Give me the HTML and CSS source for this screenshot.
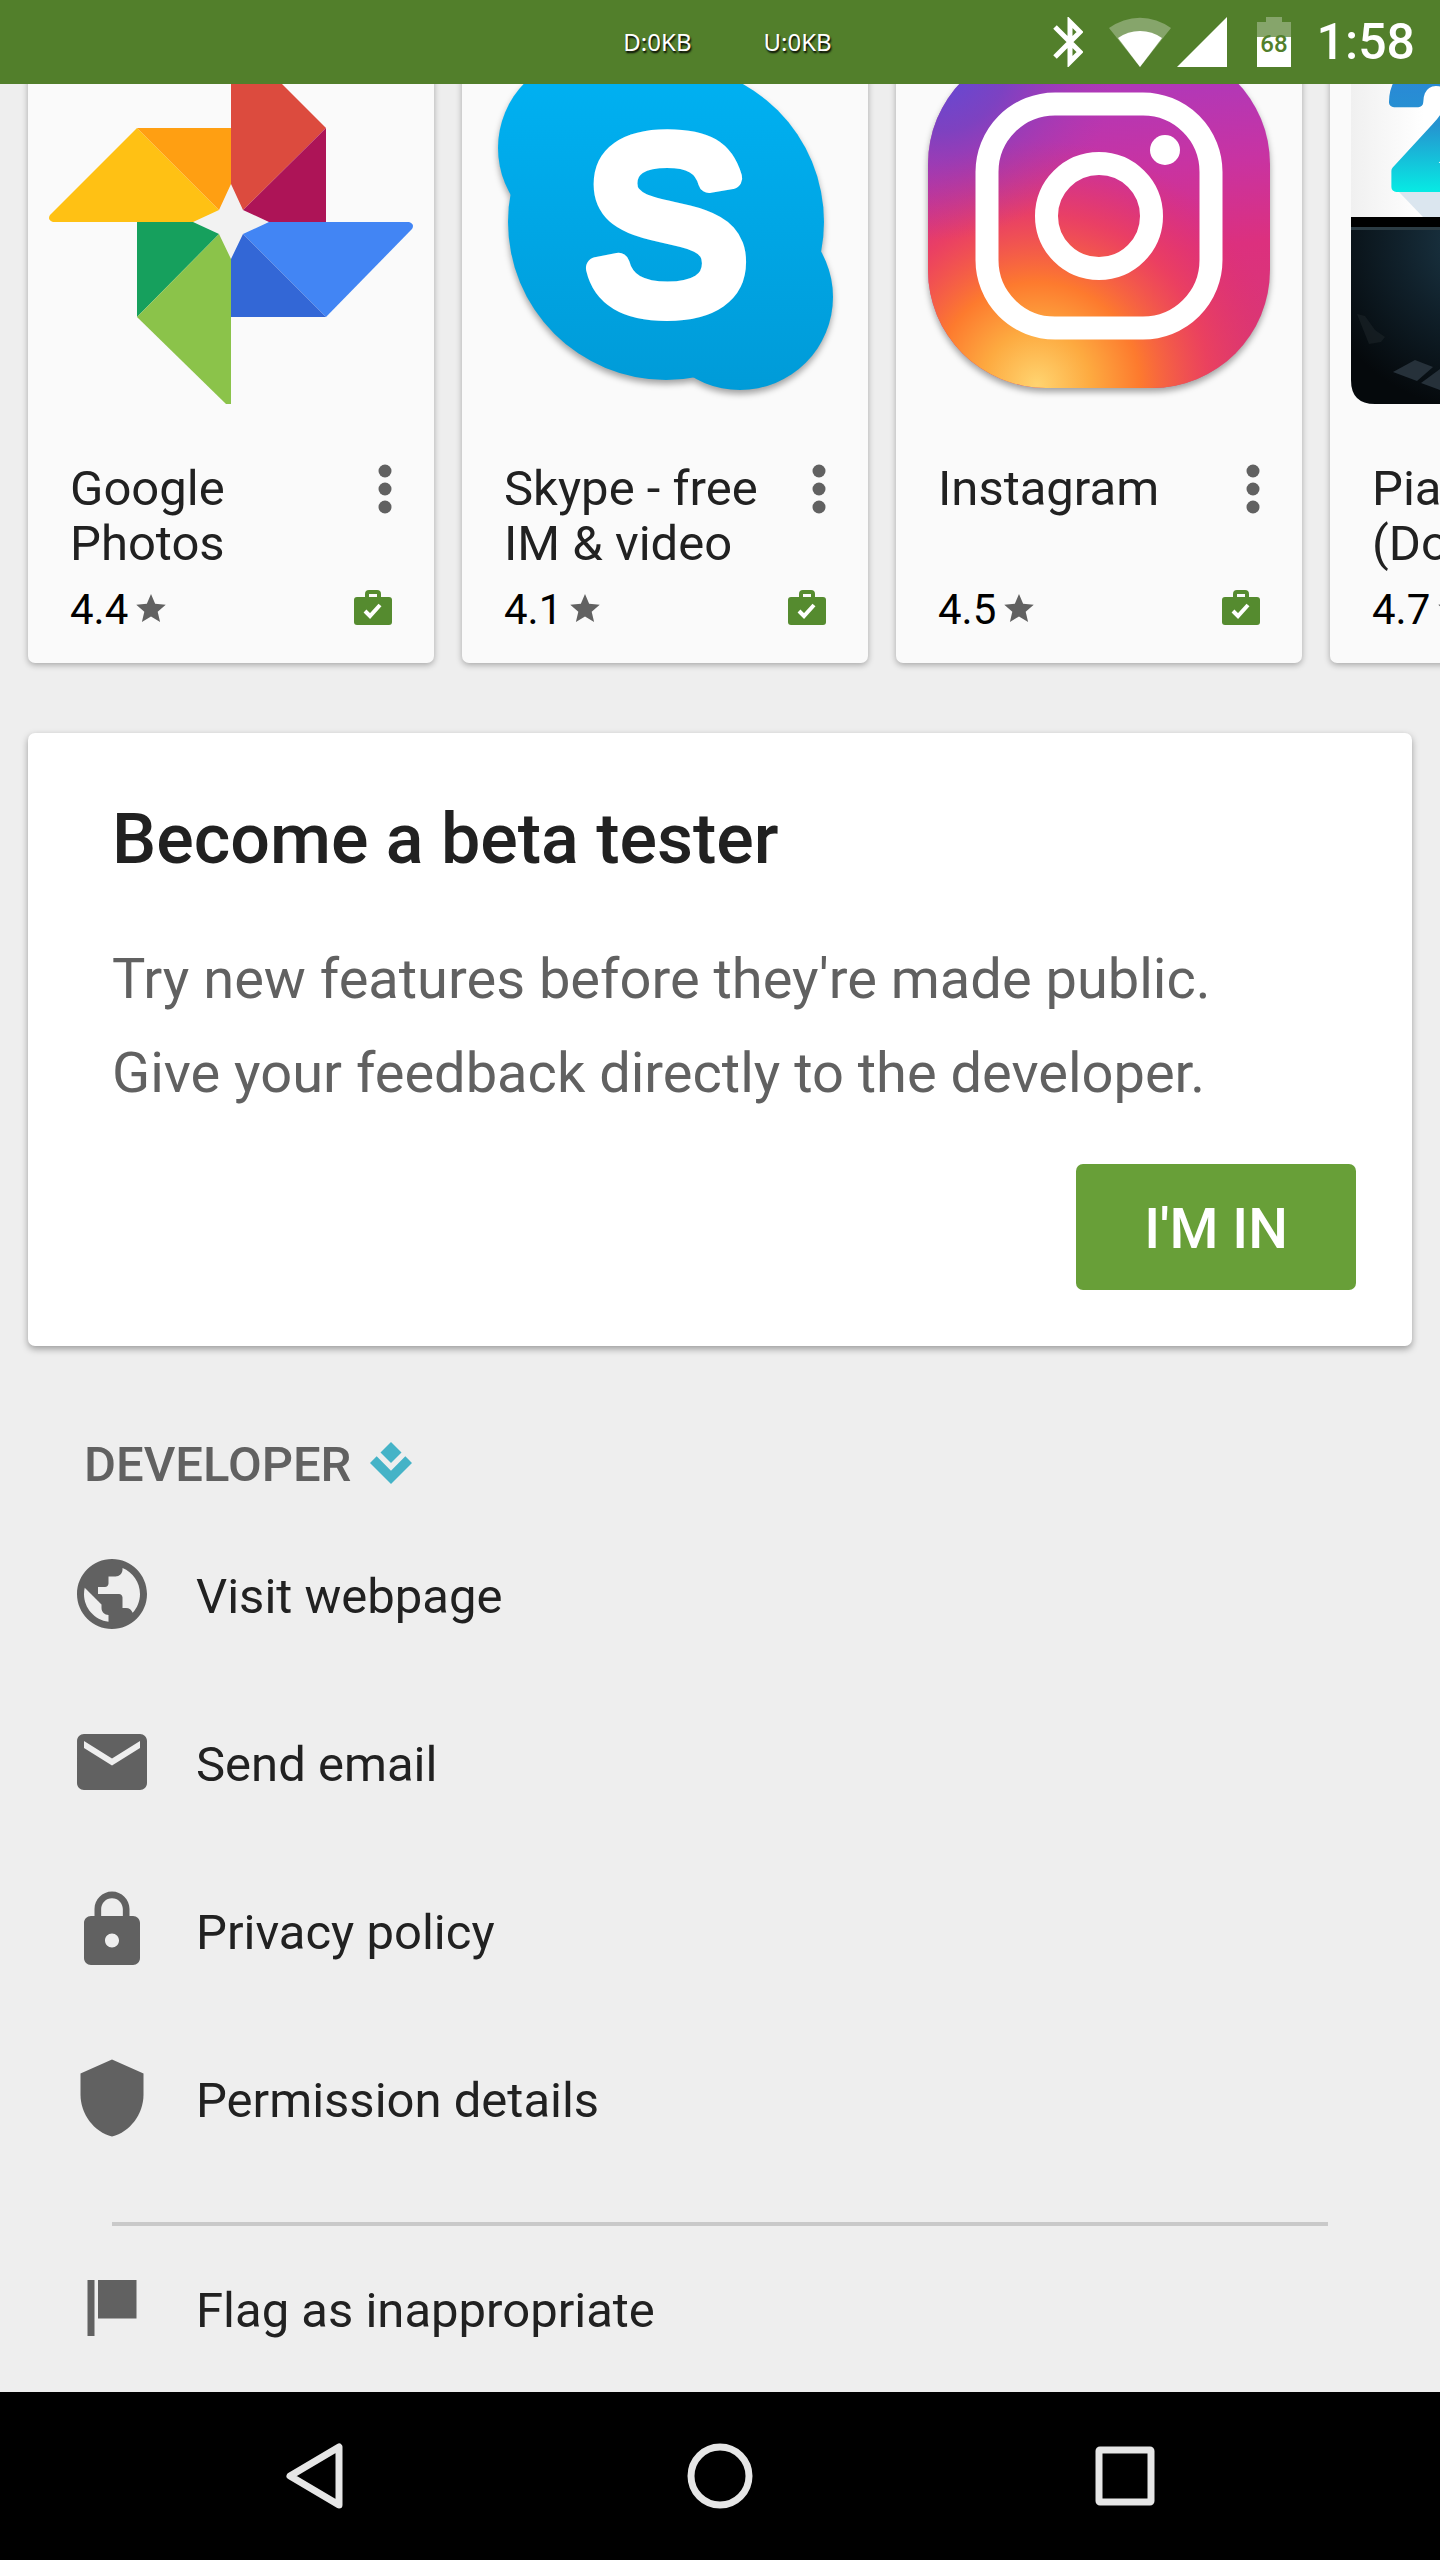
FILE: index.html
```html
<!DOCTYPE html>
<html lang="en">
  <head>
    <meta charset="UTF-8" />
    <meta name="viewport" content="width=device-width, initial-scale=1.0" />
    <title>Play Store</title>
    <link rel="stylesheet" href="styles.css">
  </head>
  <body>
    <header class="status-bar">
      <div class="traffic">
        <span>D:0KB</span>
        <span>U:0KB</span>
      </div>
      <div class="status-icons">
        <svg class="bluetooth" width="30" height="50" viewBox="0 0 30 50" fill="none" stroke="#fff" stroke-width="5">
          <path d="M2 10L27 35L17 45V5L27 15L2 40" />
        </svg>
        <svg class="wifi" width="62" height="50" viewBox="0 0 62 50">
          <path d="M0 11A52 52 0 0 1 62 11L31 50Z" fill="#fff" fill-opacity="0.3" />
          <path d="M9 21A38 38 0 0 1 53 21L31 50Z" fill="#fff" />
        </svg>
        <svg class="signal" width="50" height="50" viewBox="0 0 50 50">
          <path d="M50 0V50H0Z" fill="#fff" />
        </svg>
        <svg class="battery" width="34" height="50" viewBox="0 0 34 50">
          <path d="M9 0H25V5H34V50H0V5H9Z" fill="#fff" fill-opacity="0.3" />
          <path d="M0 20H34V50H0Z" fill="#fff" />
          <text x="17" y="35" text-anchor="middle">68</text>
        </svg>
        <span class="clock">1:58</span>
      </div>
    </header>

    <main>
      <section class="apps">
        <article class="app">
          <svg class="app-icon" viewBox="0 0 364 364">
            <path d="M4 182Q-2 180 1 175L88 88L182 182Z" fill="#ffc114" />
            <path d="M88 88H182V182Z" fill="#ff9f12" />
            <path d="M182 0H189L277 88L182 182Z" fill="#dc4b3e" />
            <path d="M277 88V182H182Z" fill="#ad1457" />
            <path d="M182 182H360Q366 184 363 189L277 277Z" fill="#4285f4" />
            <path d="M182 182L277 277H182Z" fill="#3367d6" />
            <path d="M88 182H182L88 277Z" fill="#16a05d" />
            <path d="M88 277L182 182V364H177Z" fill="#8bc34a" />
            <path d="M182 144L194 170L220 182L194 194L182 219L170 194L144 182L170 170Z" fill="#f2f2f2" />
          </svg>
          <div class="app-head">
            <h3>Google Photos</h3>
            <button class="more" aria-label="More options">
              <svg width="14" height="50" viewBox="0 0 14 50"><circle cx="7" cy="7" r="6.5" /><circle cx="7" cy="25" r="6.5" /><circle cx="7" cy="43" r="6.5" /></svg>
            </button>
          </div>
          <div class="app-foot">
            <span>4.4</span>
            <svg class="star" width="30" height="28" viewBox="2 2 20 19"><path d="M12 17.270L18.180 21l-1.640-7.030L22 9.240l-7.190-.610L12 2 9.190 8.630 2 9.240l5.460 4.730L5.820 21z" /></svg>
            <svg class="bag" width="38" height="36" viewBox="0 0 38 36"><path d="M13 7V4Q13 2 15 2H23Q25 2 25 4V7" fill="none" stroke="#558b2f" stroke-width="4" /><rect y="7" width="38" height="28" rx="3" fill="#558b2f" /><path d="M11 21L16 26L26 15" fill="none" stroke="#fff" stroke-width="4" /></svg>
          </div>
        </article>

        <article class="app">
          <svg class="app-icon" viewBox="0 0 364 364">
            <defs>
              <linearGradient id="skype" x1="0" y1="15" x2="0" y2="350" gradientUnits="userSpaceOnUse">
                <stop offset="0" stop-color="#00b2f3" />
                <stop offset="1" stop-color="#009bd8" />
              </linearGradient>
            </defs>
            <g class="raised" fill="url(#skype)">
              <circle cx="183" cy="182" r="158" />
              <circle cx="108" cy="108" r="93" />
              <circle cx="257" cy="257" r="93" />
            </g>
            <text class="skype-letter" x="183" y="268" text-anchor="middle">S</text>
          </svg>
          <div class="app-head">
            <h3>Skype - free IM &amp; video</h3>
            <button class="more" aria-label="More options">
              <svg width="14" height="50" viewBox="0 0 14 50"><circle cx="7" cy="7" r="6.5" /><circle cx="7" cy="25" r="6.5" /><circle cx="7" cy="43" r="6.5" /></svg>
            </button>
          </div>
          <div class="app-foot">
            <span>4.1</span>
            <svg class="star" width="30" height="28" viewBox="2 2 20 19"><path d="M12 17.270L18.180 21l-1.640-7.030L22 9.240l-7.190-.610L12 2 9.190 8.630 2 9.240l5.460 4.730L5.820 21z" /></svg>
            <svg class="bag" width="38" height="36" viewBox="0 0 38 36"><path d="M13 7V4Q13 2 15 2H23Q25 2 25 4V7" fill="none" stroke="#558b2f" stroke-width="4" /><rect y="7" width="38" height="28" rx="3" fill="#558b2f" /><path d="M11 21L16 26L26 15" fill="none" stroke="#fff" stroke-width="4" /></svg>
          </div>
        </article>

        <article class="app">
          <svg class="app-icon" viewBox="0 0 364 364">
            <defs>
              <linearGradient id="insta-base" x1="200" y1="10" x2="230" y2="348" gradientUnits="userSpaceOnUse">
                <stop offset="0" stop-color="#a63ac2" />
                <stop offset="0.35" stop-color="#c833a2" />
                <stop offset="0.6" stop-color="#dc307e" />
                <stop offset="1" stop-color="#d83a70" />
              </linearGradient>
              <radialGradient id="insta-warm" cx="120" cy="345" r="245" gradientUnits="userSpaceOnUse">
                <stop offset="0" stop-color="#ffd470" />
                <stop offset="0.22" stop-color="#fdaa40" />
                <stop offset="0.42" stop-color="#fd7a2e" />
                <stop offset="0.7" stop-color="#f04458" stop-opacity="0.75" />
                <stop offset="1" stop-color="#e0306e" stop-opacity="0" />
              </radialGradient>
              <radialGradient id="insta-cool" cx="20" cy="20" r="180" gradientUnits="userSpaceOnUse">
                <stop offset="0" stop-color="#5a4cda" />
                <stop offset="0.4" stop-color="#7044c4" stop-opacity="0.8" />
                <stop offset="1" stop-color="#a03ab0" stop-opacity="0" />
              </radialGradient>
            </defs>
            <rect class="raised" x="11" y="6" width="342" height="342" rx="118" fill="url(#insta-base)" />
            <rect x="11" y="6" width="342" height="342" rx="118" fill="url(#insta-warm)" />
            <rect x="11" y="6" width="342" height="342" rx="118" fill="url(#insta-cool)" />
            <g fill="none" stroke="#fff" stroke-width="23">
              <rect x="70" y="64" width="224" height="224" rx="68" />
              <circle cx="182" cy="176" r="52.5" />
            </g>
            <circle cx="248" cy="110" r="15" fill="#fff" />
          </svg>
          <div class="app-head">
            <h3>Instagram</h3>
            <button class="more" aria-label="More options">
              <svg width="14" height="50" viewBox="0 0 14 50"><circle cx="7" cy="7" r="6.5" /><circle cx="7" cy="25" r="6.5" /><circle cx="7" cy="43" r="6.5" /></svg>
            </button>
          </div>
          <div class="app-foot">
            <span>4.5</span>
            <svg class="star" width="30" height="28" viewBox="2 2 20 19"><path d="M12 17.270L18.180 21l-1.640-7.030L22 9.240l-7.190-.610L12 2 9.190 8.630 2 9.240l5.460 4.730L5.820 21z" /></svg>
            <svg class="bag" width="38" height="36" viewBox="0 0 38 36"><path d="M13 7V4Q13 2 15 2H23Q25 2 25 4V7" fill="none" stroke="#558b2f" stroke-width="4" /><rect y="7" width="38" height="28" rx="3" fill="#558b2f" /><path d="M11 21L16 26L26 15" fill="none" stroke="#fff" stroke-width="4" /></svg>
          </div>
        </article>

        <article class="app">
          <svg class="app-icon" viewBox="0 0 364 364">
            <defs>
              <linearGradient id="piano-top" x1="0" y1="0" x2="1" y2="0">
                <stop offset="0" stop-color="#f0f0f0" />
                <stop offset="0.2" stop-color="#ffffff" />
              </linearGradient>
              <linearGradient id="piano-two" x1="0" y1="30" x2="0" y2="153" gradientUnits="userSpaceOnUse">
                <stop offset="0" stop-color="#2a86d8" />
                <stop offset="0.45" stop-color="#2594d0" />
                <stop offset="1" stop-color="#06ece4" />
              </linearGradient>
              <radialGradient id="piano-dark" cx="130" cy="200" r="170" gradientUnits="userSpaceOnUse">
                <stop offset="0" stop-color="#1d3a4a" />
                <stop offset="0.5" stop-color="#10202a" />
                <stop offset="1" stop-color="#05090c" />
              </radialGradient>
            </defs>
            <rect width="364" height="190" fill="url(#piano-top)" />
            <path d="M48 152H364V177H72Z" fill="#dbe6ef" />
            <text class="piano-two" x="37" y="147">2</text>
            <path d="M0 177H364V364H24Q0 364 0 340Z" fill="url(#piano-dark)" />
            <path d="M0 177H364V187H0Z" fill="#000" />
            <path d="M0 187H364V190H0Z" fill="#2c3c44" />
            <path d="M6 274L14 276L24 290L34 297L30 302L18 304Z" fill="#20272b" opacity="0.5" />
            <path d="M42 332L64 320L82 327L66 341Z" fill="#26313a" />
            <path d="M70 343L89 329V350Z" fill="#26313a" />
          </svg>
          <div class="app-head">
            <h3>Piano (Donate)</h3>
            <button class="more" aria-label="More options">
              <svg width="14" height="50" viewBox="0 0 14 50"><circle cx="7" cy="7" r="6.5" /><circle cx="7" cy="25" r="6.5" /><circle cx="7" cy="43" r="6.5" /></svg>
            </button>
          </div>
          <div class="app-foot">
            <span>4.7</span>
            <svg class="star" width="30" height="28" viewBox="2 2 20 19"><path d="M12 17.270L18.180 21l-1.640-7.030L22 9.240l-7.190-.610L12 2 9.190 8.630 2 9.240l5.460 4.730L5.820 21z" /></svg>
          </div>
        </article>
      </section>

      <section class="beta">
        <h2>Become a beta tester</h2>
        <p>Try new features before they're made public.<br />Give your feedback directly to the developer.</p>
        <button class="join">I'M IN</button>
      </section>

      <section class="developer">
        <h2>
          DEVELOPER
          <svg width="42" height="44" viewBox="0 0 44 44" fill="#45b3c7"><path d="M22 0L33 11L22 22L11 11Z" /><path d="M7 15L22 30L37 15L44 22L22 44L0 22Z" /></svg>
        </h2>
        <ul class="links">
          <li>
            <a href="#">
              <svg viewBox="0 0 24 24"><path d="M12 2C6.480 2 2 6.480 2 12s4.480 10 10 10 10-4.480 10-10S17.520 2 12 2zm-1 17.930c-3.950-.490-7-3.850-7-7.930 0-.620.080-1.210.210-1.790L9 15v1c0 1.100.900 2 2 2v1.930zm6.900-2.540c-.260-.810-1-1.390-1.900-1.390h-1v-3c0-.550-.450-1-1-1H8v-2h2c.550 0 1-.450 1-1V7h2c1.100 0 2-.900 2-2v-.410c2.930 1.190 5 4.060 5 7.410 0 2.080-.800 3.970-2.100 5.390z" /></svg>
              <span>Visit webpage</span>
            </a>
          </li>
          <li>
            <a href="#">
              <svg viewBox="0 0 24 24"><path d="M20 4H4c-1.100 0-1.990.900-1.990 2L2 18c0 1.100.900 2 2 2h16c1.100 0 2-.900 2-2V6c0-1.100-.900-2-2-2zm0 4l-8 5-8-5V6l8 5 8-5v2z" /></svg>
              <span>Send email</span>
            </a>
          </li>
          <li>
            <a href="#">
              <svg viewBox="0 0 24 24"><path d="M18 8h-1V6c0-2.760-2.240-5-5-5S7 3.240 7 6v2H6c-1.100 0-2 .900-2 2v10c0 1.100.900 2 2 2h12c1.100 0 2-.900 2-2V10c0-1.100-.900-2-2-2zm-6 9c-1.100 0-2-.900-2-2s.900-2 2-2 2 .900 2 2-.900 2-2 2zm3.100-9H8.900V6c0-1.710 1.390-3.100 3.100-3.100s3.100 1.390 3.100 3.100v2z" /></svg>
              <span>Privacy policy</span>
            </a>
          </li>
          <li>
            <a href="#">
              <svg viewBox="0 0 24 24"><path d="M12 1L3 5v6c0 5.550 3.840 10.740 9 12 5.160-1.260 9-6.450 9-12V5l-9-4z" /></svg>
              <span>Permission details</span>
            </a>
          </li>
        </ul>
        <hr />
        <ul class="links report">
          <li>
            <a href="#">
              <svg viewBox="0 0 24 24"><path d="M5 4H7V20H5Z" /><path d="M8 4H19V15H8Z" /></svg>
              <span>Flag as inappropriate</span>
            </a>
          </li>
        </ul>
      </section>
    </main>

    <nav class="nav-bar">
      <button aria-label="Back">
        <svg width="72" height="72" viewBox="0 0 72 72"><path d="M60 7V65L11 36Z" /></svg>
      </button>
      <button aria-label="Home">
        <svg width="72" height="72" viewBox="0 0 72 72"><circle cx="36" cy="36" r="29" /></svg>
      </button>
      <button aria-label="Recent apps">
        <svg width="72" height="72" viewBox="0 0 72 72"><rect x="10" y="10" width="52" height="52" rx="1" /></svg>
      </button>
    </nav>
  </body>
</html>
```
FILE: styles.css
```css
* {
  box-sizing: border-box;
  margin: 0;
  padding: 0;
}

body {
  min-height: 100vh;
  display: flex;
  flex-direction: column;
  overflow-x: hidden;
  background-color: #eeeeee;
  color: #212121;
  font-family: Roboto, sans-serif;
}

svg {
  display: block;
  flex-shrink: 0;
}

button {
  border: none;
  background: none;
  font-family: inherit;
  cursor: pointer;
}

/* status bar */
.status-bar {
  position: sticky;
  top: 0;
  z-index: 1;
  height: 84px;
  display: grid;
  grid-template-columns: 1fr auto 1fr;
  align-items: center;
  padding-right: 25px;
  background-color: #527f2b;
  color: #fff;
}

.traffic {
  grid-column: 2;
  display: flex;
  gap: 72px;
  padding-left: 40px;
  font-family: 'Noto Sans', sans-serif;
  font-size: 24px;
  line-height: 28px;
  text-shadow: 1px 2px 2px #000;
}

.status-icons {
  justify-self: end;
  display: flex;
  align-items: center;
}

.wifi {
  margin-left: 26px;
}

.signal {
  margin-left: 6px;
}

.battery {
  margin: 0 26px 0 30px;
  font-size: 24px;
  font-weight: 500;
}

.battery text {
  fill: #527f2b;
}

.clock {
  font-size: 50px;
  font-weight: 500;
  line-height: 56px;
}

/* app cards, scrolled partly under the status bar */
.apps {
  display: flex;
  gap: 28px;
  margin-top: -65px;
  padding: 0 0 70px 28px;
  overflow: hidden;
}

.app {
  flex: 0 0 406px;
  padding: 21px 21px 29px;
  border-radius: 7px;
  background-color: #fafafa;
  box-shadow: 0 2px 6px rgba(0, 0, 0, 0.3);
}

.app-icon {
  width: 364px;
  height: 364px;
}

.raised {
  filter: drop-shadow(0 4px 3px rgba(0, 0, 0, 0.35));
}

.skype-letter {
  font-family: 'Liberation Sans', Arial, sans-serif;
  font-size: 240px;
  fill: #fff;
  stroke: #fff;
  stroke-width: 22px;
  stroke-linejoin: round;
}

.piano-two {
  font-size: 172px;
  font-weight: 700;
  fill: url(#piano-two);
  stroke: url(#piano-two);
  stroke-width: 10px;
  stroke-linejoin: round;
}

.app-head {
  display: flex;
  justify-content: space-between;
  align-items: flex-start;
  margin: 57px 21px 14px;
}

.app h3 {
  width: 272px;
  min-height: 110px;
  font-size: 49px;
  font-weight: 400;
  line-height: 55px;
}

.more {
  padding-top: 3px;
  fill: #616161;
}

.app-foot {
  display: flex;
  align-items: center;
  margin: 0 21px;
  color: #000;
  font-size: 42px;
  line-height: 49px;
}

.app-foot svg {
  margin-bottom: 4px;
}

.star {
  margin-left: 8px;
  fill: #616161;
}

.bag {
  margin-left: auto;
}

/* beta card */
.beta {
  display: flex;
  flex-direction: column;
  margin: 0 28px;
  padding: 65px 56px 56px 84px;
  border-radius: 7px;
  background-color: #fff;
  box-shadow: 0 3px 7px rgba(0, 0, 0, 0.35);
}

.beta h2 {
  margin-bottom: 52px;
  font-size: 70px;
  font-weight: 500;
  line-height: 82px;
}

.beta p {
  margin-bottom: 44px;
  color: #616161;
  font-size: 56px;
  line-height: 94px;
}

.join {
  align-self: flex-end;
  width: 280px;
  height: 126px;
  padding-top: 4px;
  border-radius: 7px;
  background-color: #689f38;
  color: #fff;
  font-size: 56px;
  font-weight: 500;
}

/* developer */
.developer h2 {
  display: flex;
  align-items: center;
  gap: 19px;
  margin: 90px 84px 16px;
  color: #616161;
  font-size: 49px;
  font-weight: 500;
  line-height: 58px;
}

.developer h2 svg {
  margin-bottom: 4px;
}

.links {
  list-style: none;
}

.links a {
  display: flex;
  align-items: center;
  gap: 42px;
  height: 168px;
  padding: 0 70px;
  color: #212121;
  font-size: 49px;
  line-height: 58px;
  text-decoration: none;
}

.links svg {
  width: 84px;
  height: 84px;
  fill: #616161;
}

.links span {
  padding-top: 6px;
}

.developer hr {
  height: 4px;
  margin: 40px 112px 0;
  border: none;
  background-color: #c9c9c9;
}

.report a {
  height: 164px;
}

/* navigation bar */
.nav-bar {
  height: 168px;
  display: flex;
  justify-content: center;
  align-items: center;
  gap: 333px;
  margin-top: auto;
  background-color: #000;
}

.nav-bar svg {
  fill: none;
  stroke: #e6e6e6;
  stroke-width: 7px;
  stroke-linejoin: round;
}
```
